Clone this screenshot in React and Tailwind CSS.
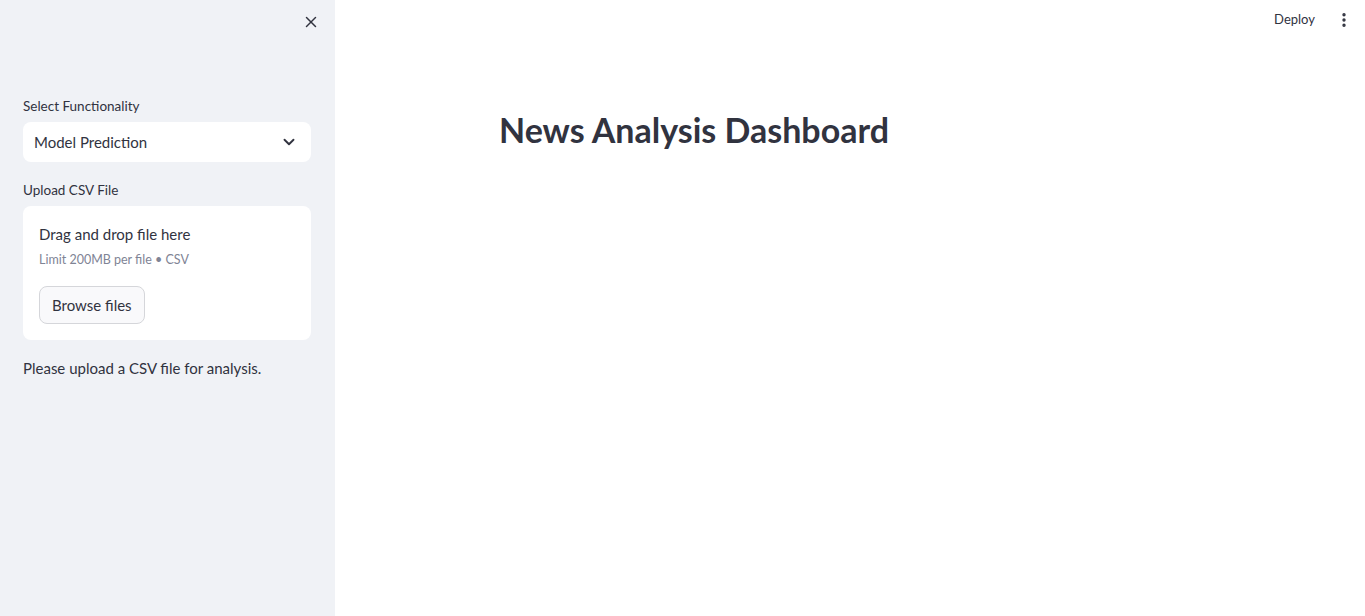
import React from "react";
import { X, ChevronDown, EllipsisVertical } from "lucide-react";

function Sidebar() {
  return (
    <aside className="w-[335px] shrink-0 min-h-screen bg-[#f0f2f6] relative">
      <button className="absolute top-[12px] right-[14px] w-[20px] h-[20px] flex items-center justify-center text-[#31333f]">
        <X size={18} strokeWidth={2} />
      </button>

      <div className="pl-[23px] pr-[24px] pt-[96px]">
        <p className="text-[13.5px] leading-[20px] text-[#31333f]">Select Functionality</p>
        <div className="mt-[6px] h-[40px] bg-white rounded-lg flex items-center justify-between pl-[11px] pr-[13px]">
          <span className="text-[15px] text-[#31333f]">Model Prediction</span>
          <ChevronDown size={18} strokeWidth={2.5} className="text-[#31333f]" />
        </div>

        <p className="mt-[18px] text-[13.5px] leading-[20px] text-[#31333f]">Upload CSV File</p>
        <div className="mt-[6px] bg-white rounded-lg p-[16px]">
          <p className="text-[15px] leading-[24px] text-[#31333f]">Drag and drop file here</p>
          <p className="mt-[4px] text-[12.5px] leading-[20px] text-[#808495]">Limit 200MB per file • CSV</p>
          <button className="mt-[16px] h-[38px] px-[12px] rounded-lg border border-[#d5d6da] bg-[#f9f9fb] text-[15px] text-[#31333f]">
            Browse files
          </button>
        </div>

        <p className="mt-[16px] text-[15px] leading-[24px] text-[#31333f]">Please upload a CSV file for analysis.</p>
      </div>
    </aside>
  );
}

export default function App() {
  return (
    <div className="flex w-full h-[616px] overflow-hidden bg-white text-[#31333f]" style={{ fontFamily: "Lato, 'Noto Sans', sans-serif" }}>
      <Sidebar />
      <main className="flex-1 relative">
        <header className="h-[40px] flex items-center justify-end pr-[12px]">
          <span className="text-[13px] text-[#31333f] mr-[20px]">Deploy</span>
          <EllipsisVertical size={18} strokeWidth={2.5} />
        </header>
        <div className="pl-[164px] pt-[68px]">
          <h1 className="text-[34px] leading-[44px] font-bold text-[#31333f]">News Analysis Dashboard</h1>
        </div>
      </main>
    </div>
  );
}
